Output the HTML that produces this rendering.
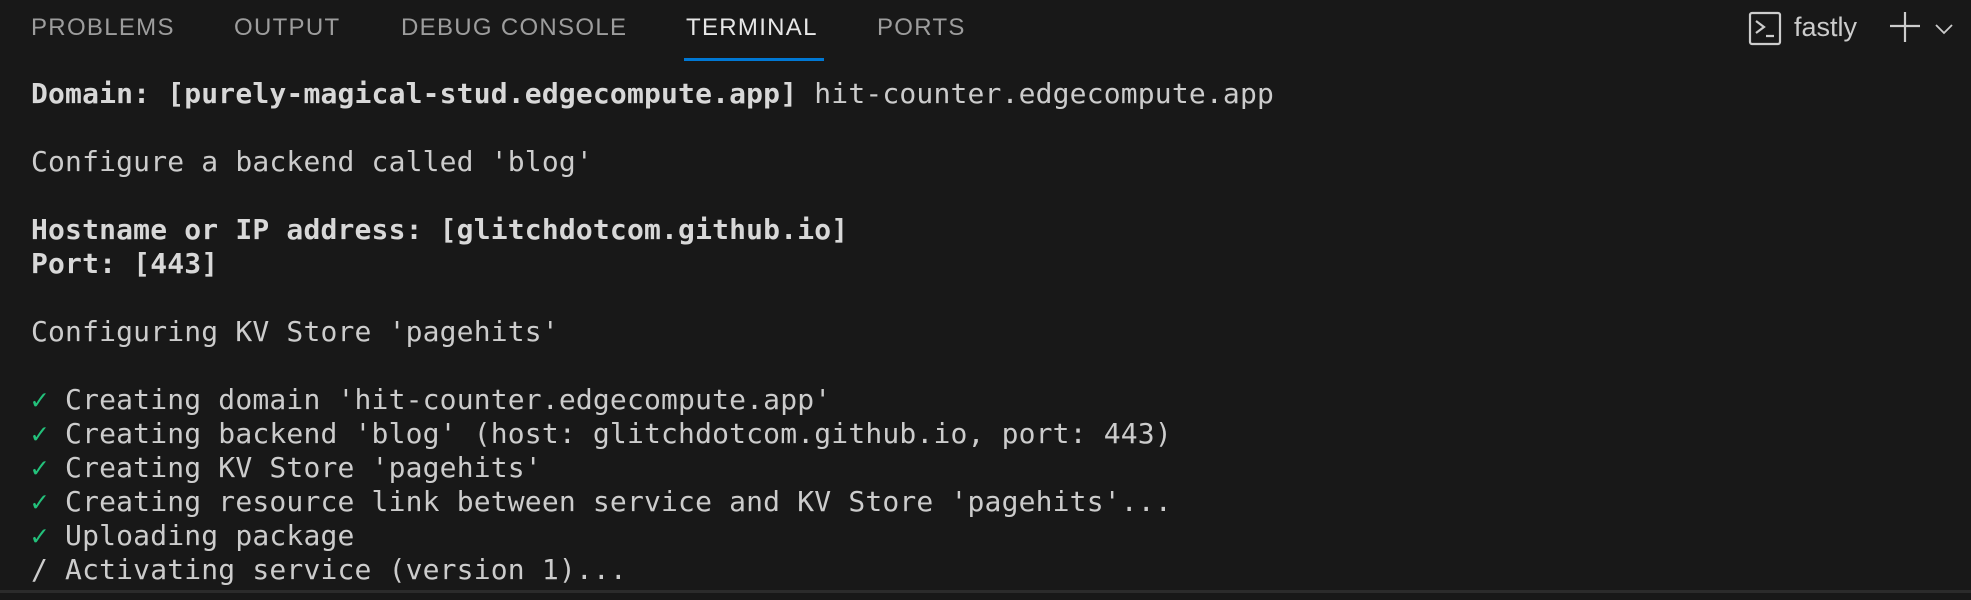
<!DOCTYPE html>
<html><head><style>
html,body{margin:0;padding:0;background:#181818;width:1971px;height:600px;overflow:hidden;position:relative}
.tab{position:absolute;top:12px;font:24px "Liberation Sans",sans-serif;letter-spacing:1.3px;color:#9d9d9d;line-height:32px}
.term{position:absolute;left:31px;top:77px;font:28px "DejaVu Sans Mono","Liberation Mono",monospace;letter-spacing:0.17px;color:#cccccc;line-height:34px;white-space:pre;margin:0}
b{color:#d8d8d8}
.g{color:#23c17b}
</style></head><body>
<div class="tab" style="left:31px">PROBLEMS</div>
<div class="tab" style="left:234px">OUTPUT</div>
<div class="tab" style="left:401px">DEBUG CONSOLE</div>
<div class="tab" style="left:686px;color:#e7e7e7">TERMINAL</div>
<div class="tab" style="left:877px">PORTS</div>
<div style="position:absolute;left:684px;top:58px;width:140px;height:3px;background:#0078d4"></div>
<svg style="position:absolute;left:1748px;top:11px" width="36" height="36" viewBox="0 0 36 36" fill="none" stroke="#cccccc" stroke-width="2.2"><rect x="2" y="2" width="30" height="31" rx="2"/><path d="M8 10l8 6-8 6M18 25h8"/></svg>
<div style="position:absolute;left:1794px;top:10px;font:27px 'Liberation Sans',sans-serif;color:#cccccc;line-height:34px">fastly</div>
<svg style="position:absolute;left:1888px;top:10px" width="34" height="34" viewBox="0 0 34 34" stroke="#cccccc" stroke-width="2.2"><path d="M17 2v30M2 16h30"/></svg>
<svg style="position:absolute;left:1934px;top:22px" width="20" height="14" viewBox="0 0 20 14" fill="none" stroke="#cccccc" stroke-width="1.8"><path d="M2 3l8 8 8-8"/></svg>
<pre class="term"><b>Domain: [purely-magical-stud.edgecompute.app]</b> hit-counter.edgecompute.app

Configure a backend called 'blog'

<b>Hostname or IP address: [glitchdotcom.github.io]</b>
<b>Port: [443]</b>

Configuring KV Store 'pagehits'

<span class="g">✓</span> Creating domain 'hit-counter.edgecompute.app'
<span class="g">✓</span> Creating backend 'blog' (host: glitchdotcom.github.io, port: 443)
<span class="g">✓</span> Creating KV Store 'pagehits'
<span class="g">✓</span> Creating resource link between service and KV Store 'pagehits'...
<span class="g">✓</span> Uploading package
/ Activating service (version 1)...</pre>
<div style="position:absolute;left:0;top:590px;width:1971px;height:3px;background:#2b2b2b"></div>
</body></html>
